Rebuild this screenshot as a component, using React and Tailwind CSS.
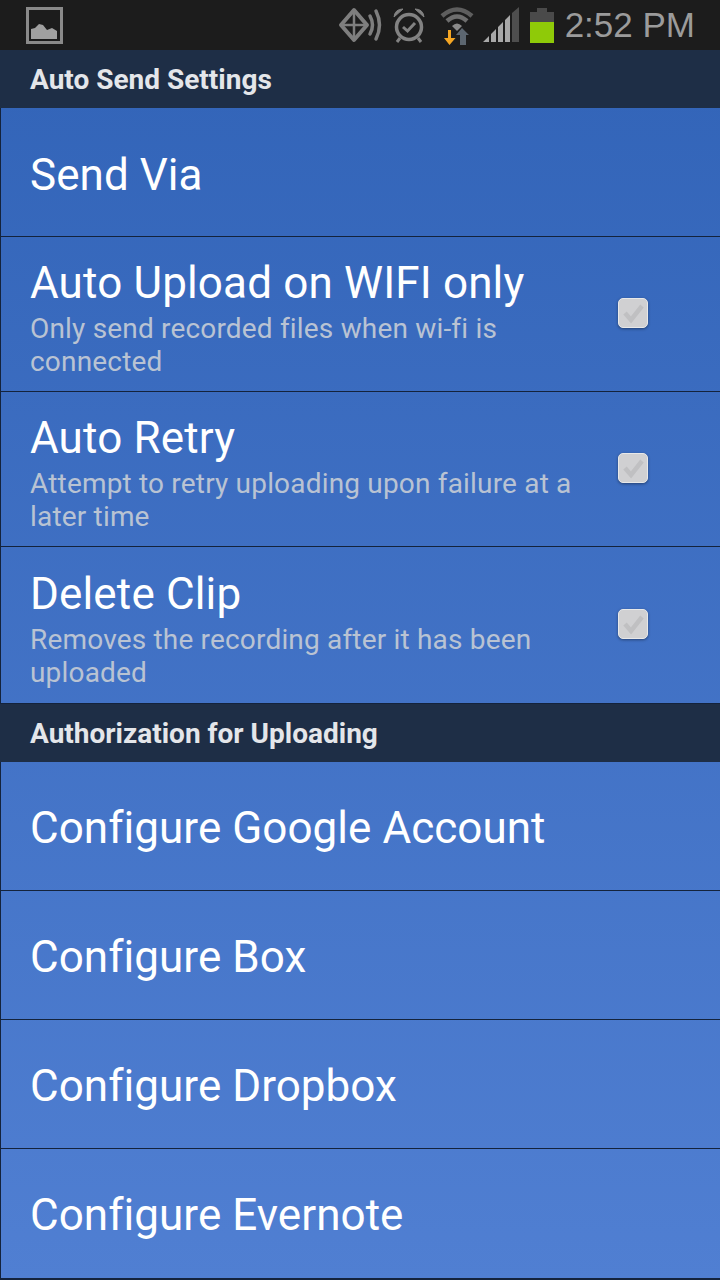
import { Fragment } from 'react';

const sections = [
  {
    title: 'Auto Send Settings',
    titleOffset: 'pt-[2px]',
    items: [
      { label: 'Send Via', height: 'h-[129px]', offset: 'pt-[6px]' },
      { label: 'Auto Upload on WIFI only', sub: 'Only send recorded files when wi-fi is connected', height: 'h-[155px]' },
      { label: 'Auto Retry', sub: 'Attempt to retry uploading upon failure at a later time', height: 'h-[155px]' },
      { label: 'Delete Clip', sub: 'Removes the recording after it has been uploaded', height: 'h-[156px]' },
    ],
  },
  {
    title: 'Authorization for Uploading',
    titleOffset: 'pt-[1px]',
    items: [
      { label: 'Configure Google Account', height: 'h-[129px]', offset: 'pt-[3px]' },
      { label: 'Configure Box', height: 'h-[129px]', offset: 'pt-[3px]' },
      { label: 'Configure Dropbox', height: 'h-[129px]', offset: 'pt-[3px]' },
      { label: 'Configure Evernote', height: 'h-[129px]', offset: 'pt-[3px]' },
    ],
  },
];

function GalleryIcon() {
  return (
    <svg width="37" height="37" viewBox="0 0 37 37">
      <rect x="1.5" y="1.5" width="34" height="34" fill="none" stroke="#8a8a8a" strokeWidth="3" />
      <path d="M5 32 V22 L9 21 L13 17 L17 18 L21 23 L26 21 L31 24 V32 Z" fill="#a0a0a0" />
    </svg>
  );
}

function StatusIcons() {
  return (
    <div className="flex items-center">
      <svg width="47" height="36" viewBox="0 0 47 36" fill="none" stroke="#7e7e7e">
        <path d="M16 3 L29 18 L16 33 L3 18 Z" strokeWidth="4" strokeLinejoin="round" />
        <path d="M16 3 V33 M3 18 H29" strokeWidth="2.5" />
        <path d="M32 9 Q37 18 32 27 M38 4 Q45 18 38 32" strokeWidth="3.5" strokeLinecap="round" />
      </svg>
      <svg width="34" height="36" viewBox="0 0 34 36" fill="none" stroke="#828282" className="ml-[7px]">
        <circle cx="17" cy="20" r="12.500" strokeWidth="3.500" />
        <path d="M11 20 L15.500 24 L23 16" strokeWidth="3" />
        <path d="M2 10 Q3 2 11 2 Z M32 10 Q31 2 23 2 Z" fill="#828282" strokeWidth="1" />
        <path d="M8 31 L5 35 M26 31 L29 35" strokeWidth="3" />
      </svg>
      <svg width="34" height="42" viewBox="0 0 34 42" fill="none" className="ml-[14px]">
        <path d="M2 12 Q17 -1 32 12" stroke="#5e5e5e" strokeWidth="4.500" />
        <path d="M7 17 Q17 8 27 17" stroke="#6e6e6e" strokeWidth="4.500" />
        <path d="M12 22 Q17 17 22 22 L17 27 Z" fill="#8a8a8a" />
        <path d="M22 24 L29 31 H26 V41 H20 V31 H16 Z" fill="#5c6670" />
        <path d="M11 26 V34 H15.500 L9.500 41 L4 34 H8 V26 Z" fill="#f5a623" />
      </svg>
      <svg width="37" height="36" viewBox="0 0 37 36" className="ml-[9px]">
        <path d="M0 35 L6 29 V35 Z M8 27 L13 22 V35 H8 Z M15 20 L20 15 V35 H15 Z M22 13 L27 8 V35 H22 Z" fill="#a8a8a8" />
        <path d="M29 6 L36 0 V35 H29 Z" fill="#4e4e4e" />
      </svg>
      <div className="flex flex-col items-center ml-[10px] w-[24px]">
        <div className="w-[10px] h-[4px] bg-[#4a4a4a]" />
        <div className="w-[24px] h-[10px] bg-[#4a4a4a]" />
        <div className="w-[24px] h-[21px] bg-[#8fca08]" />
      </div>
    </div>
  );
}

function CheckBox() {
  return (
    <div className="w-[30px] h-[30px] rounded-[5px] bg-[#d0d0d2] border border-[#e8e8e8] shadow-[0_1px_3px_rgba(0,0,0,0.4)] flex items-center justify-center">
      <svg width="24" height="24" viewBox="0 0 24 24" fill="none">
        <path d="M4 12 L10 19 L21 5" stroke="#c0c0c2" strokeWidth="4.500" />
      </svg>
    </div>
  );
}

function Row({ item }) {
  if (!item.sub) {
    return (
      <div className={`flex items-center pl-[29px] ${item.offset} ${item.height}`}>
        <span className="text-[44px] leading-none tracking-[0.05px] text-white">{item.label}</span>
      </div>
    );
  }
  return (
    <div className={`flex items-center pl-[29px] ${item.height}`}>
      <div className="w-[558px] pt-[3px]">
        <div className="text-[44px] leading-[58px] tracking-[0.15px] text-white">{item.label}</div>
        <div className="text-[28px] leading-[33px] tracking-[0.18px] text-[#b9c3d3]">{item.sub}</div>
      </div>
      <div className="ml-[30px] -mt-[3px]">
        <CheckBox />
      </div>
    </div>
  );
}

export default function App() {
  return (
    <div className="w-[720px] h-[1280px] overflow-hidden bg-[#14233c] font-['Roboto','Noto_Sans',sans-serif]">
      <div className="h-[50px] bg-[#1c1c1c] flex items-center justify-between pl-[26px] pr-[25px]">
        <GalleryIcon />
        <div className="flex items-center">
          <StatusIcons />
          <span className="ml-[11px] text-[35px] leading-none text-[#9b9b9b] font-['Liberation_Sans',sans-serif] -mt-[2px]">2:52 PM</span>
        </div>
      </div>
      <div className="bg-gradient-to-b from-[#3264b8] to-[#507fd2] border-l border-[#14233c]">
        {sections.map((section) => (
          <Fragment key={section.title}>
            <div className={`h-[58px] -ml-px bg-[#1e2e46] flex items-center pl-[30px] text-[28px] font-bold text-[#e4e6ea] ${section.titleOffset}`}>
              {section.title}
            </div>
            <div className="divide-y divide-[#14233c] border-b border-[#14233c]">
              {section.items.map((item) => (
                <Row key={item.label} item={item} />
              ))}
            </div>
          </Fragment>
        ))}
      </div>
    </div>
  );
}
